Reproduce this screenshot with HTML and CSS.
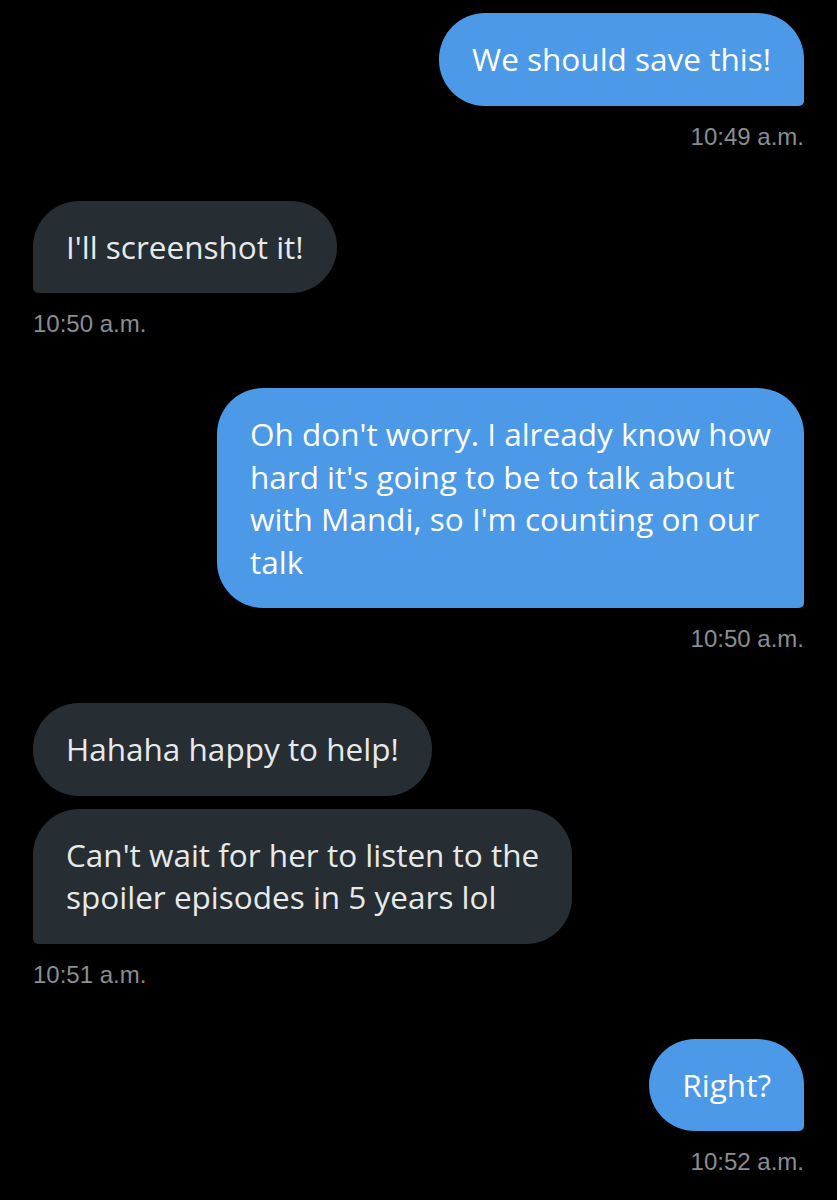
FILE: index.html
```html
<!DOCTYPE html>
<html lang="en">
<head>
<meta charset="utf-8">
<title>Messages</title>
<link rel="stylesheet" href="styles.css">
</head>
<body>
<main class="thread">
  <section class="group sent">
    <div class="bubble">We should save this!</div>
    <time class="time">10:49 a.m.</time>
  </section>
  <section class="group received">
    <div class="bubble">I'll screenshot it!</div>
    <time class="time">10:50 a.m.</time>
  </section>
  <section class="group sent">
    <div class="bubble">Oh don't worry. I already know how<br>hard it's going to be to talk about<br>with Mandi, so I'm counting on our<br>talk</div>
    <time class="time">10:50 a.m.</time>
  </section>
  <section class="group received">
    <div class="bubble first">Hahaha happy to help!</div>
    <div class="bubble">Can't wait for her to listen to the<br>spoiler episodes in 5 years lol</div>
    <time class="time">10:51 a.m.</time>
  </section>
  <section class="group sent">
    <div class="bubble">Right?</div>
    <time class="time">10:52 a.m.</time>
  </section>
</main>
</body>
</html>
```

FILE: styles.css
```css
html, body {
  margin: 0;
  padding: 0;
  background: #000;
}

.thread {
  display: flex;
  flex-direction: column;
  gap: 50px;
  padding: 13px 33px 0;
  font-family: "Open Sans", "Liberation Sans", sans-serif;
}

.group {
  display: flex;
  flex-direction: column;
  gap: 13px;
}

.group.sent {
  align-items: flex-end;
}

.group.received {
  align-items: flex-start;
}

.bubble {
  box-sizing: border-box;
  max-width: 620px;
  padding: 25px 33px;
  font-size: 31.5px;
  line-height: 42.5px;
  border-radius: 46px;
}

.sent .bubble {
  background: #4b99e7;
  color: #fff;
  border-bottom-right-radius: 5px;
}

.received .bubble {
  background: #262d33;
  color: #e7e9ea;
  border-bottom-left-radius: 5px;
}

.received .bubble.first {
  border-bottom-left-radius: 46px;
}

.time {
  display: block;
  margin-top: 4px;
  font-family: "Liberation Sans", Arial, sans-serif;
  font-size: 24px;
  line-height: 28px;
  color: #8a8d91;
}
```
